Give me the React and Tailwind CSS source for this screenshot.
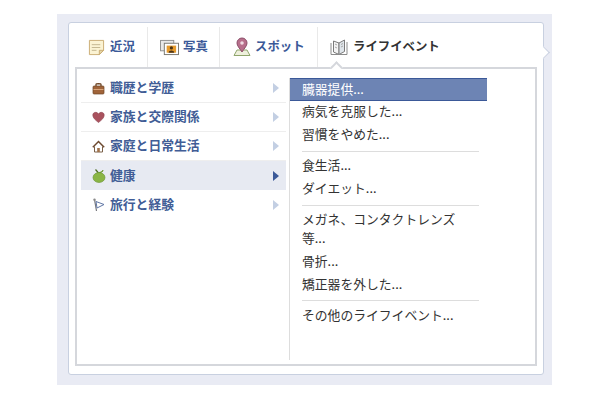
const font = { fontFamily: '"Noto Sans CJK JP", "Liberation Sans", sans-serif' };

function NoteIcon() {
  return (
    <svg width="17" height="17" viewBox="0 0 18 18" className="shrink-0">
      <path d="M1.5 1.5H16.5V12L12 16.5H1.5Z" fill="#fbf3d3" stroke="#c9ab72" />
      <path d="M16.5 12H12V16.5Z" fill="#e5d6a6" stroke="#c9ab72" />
      <path d="M4 6H13M4 9H13M4 12H9" stroke="#c2b58e" />
    </svg>
  );
}

function PhotoIcon() {
  return (
    <svg width="19" height="17" viewBox="0 0 20 18" className="shrink-0">
      <rect x="0.5" y="1.5" width="14" height="11" fill="#e8e8e8" stroke="#8e8e8e" />
      <rect x="4.5" y="4.5" width="15" height="12" fill="#fff" stroke="#77756f" />
      <rect x="7" y="7" width="10" height="7.5" fill="#e59a2d" />
      <circle cx="12" cy="9.5" r="1.7" fill="#4d3415" />
      <path d="M9 14.5C9 11.5 15 11.5 15 14.5Z" fill="#4d3415" />
    </svg>
  );
}

function PinIcon() {
  return (
    <svg width="18" height="20" viewBox="0 0 18 20" className="shrink-0">
      <path d="M4 13L1 18.5H17L14 13Z" fill="#eef0dc" stroke="#8fa56c" />
      <path d="M9 15C6.5 11 4 9 4 6A5 5 0 0 1 14 6C14 9 11.5 11 9 15Z" fill="#b76f8b" stroke="#8c4e69" />
      <circle cx="9" cy="6" r="1.8" fill="#f0dbe3" />
    </svg>
  );
}

function BookIcon() {
  return (
    <svg width="18" height="17" viewBox="0 0 18 17" className="shrink-0">
      <path d="M9 4L3.5 2V13L9 15.5Z" fill="#f4f4f4" stroke="#7b7b7b" />
      <path d="M9 4L14.5 1V12.5L9 15.5Z" fill="#dfe5ea" stroke="#7b7b7b" />
      <path d="M1 4V15.5H9M17 3V15.5H9" fill="none" stroke="#8b8b8b" />
      <path d="M11 5.5L13 4.5M11 8L13 7M5 5L7 6M5 8L7 9" stroke="#a8a8a8" />
    </svg>
  );
}

function BriefcaseIcon() {
  return (
    <svg width="13" height="13" viewBox="0 0 13 13">
      <path d="M4 4V2.5C4 1.5 9 1.5 9 2.5V4" fill="none" stroke="#6d4525" strokeWidth="1.3" />
      <rect x="1" y="4" width="11" height="8" rx="1" fill="#a0643a" stroke="#6d4525" strokeWidth="0.7" />
      <path d="M1.5 7.5H11.5" stroke="#d8a67c" />
    </svg>
  );
}

function HeartIcon() {
  return (
    <svg width="13" height="12" viewBox="0 0 13 12">
      <path d="M6.5 11.5C3 8.8 0.8 6.8 0.8 4.1C0.8 1 5 0.3 6.5 3C8 0.3 12.2 1 12.2 4.1C12.2 6.8 10 8.8 6.5 11.5Z" fill="#a9525e" stroke="#8e4450" strokeWidth="0.6" />
    </svg>
  );
}

function HouseIcon() {
  return (
    <svg width="13" height="13" viewBox="0 0 13 13">
      <path d="M2.5 6.5V12H10.5V6.5" fill="#fff" stroke="#7a6048" />
      <path d="M0.8 7.2L6.5 1.5L12.2 7.2" fill="none" stroke="#6d4a30" strokeWidth="1.5" />
      <rect x="5.2" y="8" width="2.6" height="4" fill="#a0714a" />
    </svg>
  );
}

function AppleIcon() {
  return (
    <svg width="14" height="15" viewBox="0 0 14 15">
      <path d="M3.5 1.5L6.5 5" stroke="#4b6b1f" strokeWidth="1.2" />
      <path d="M7 5C9 4 11 4 11 2" stroke="#6f9a34" strokeWidth="1.2" fill="none" />
      <ellipse cx="7" cy="9.5" rx="6" ry="5" fill="#8ab545" stroke="#66902d" strokeWidth="0.6" />
    </svg>
  );
}

function FlagIcon() {
  return (
    <svg width="13" height="14" viewBox="0 0 13 14">
      <path d="M2.5 1.5L4.5 13" stroke="#77787d" strokeWidth="1.2" />
      <path d="M4 3.5L12 6.5L5 10Z" fill="#fff" stroke="#5f76a5" />
      <circle cx="2.5" cy="1.8" r="1.2" fill="#8a8a8a" />
    </svg>
  );
}

const tabs = [
  { label: '近況', icon: <NoteIcon />, className: 'w-[79px] pl-[19px] gap-[5px]', color: 'text-[#3b5998]' },
  { label: '写真', icon: <PhotoIcon />, className: 'w-[72px] pl-[12px] gap-[4px]', color: 'text-[#3b5998]' },
  { label: 'スポット', icon: <PinIcon />, className: 'w-[98px] pl-[13px] gap-[4px]', color: 'text-[#3b5998]' },
  { label: 'ライフイベント', icon: <BookIcon />, className: 'flex-1 pl-[12px] gap-[5px]', color: 'text-[#333333]' },
];

const categories = [
  { label: '職歴と学歴', icon: <BriefcaseIcon /> },
  { label: '家族と交際関係', icon: <HeartIcon /> },
  { label: '家庭と日常生活', icon: <HouseIcon /> },
  { label: '健康', icon: <AppleIcon />, active: true },
  { label: '旅行と経験', icon: <FlagIcon />, last: true },
];

function Item({ children, active }) {
  return (
    <div className={`pl-[12px] pr-[25px] leading-[19px] text-[12.8px] ${active ? 'bg-[#6d84b4] text-white border-y border-[#3b5998] pb-[2px]' : 'text-[#333333] pb-[4px]'}`}>
      {children}
    </div>
  );
}

function Sep({ tight }) {
  return <div className={`h-px bg-[#dddddd] ml-[12px] w-[177px] ${tight ? 'mt-[3px] mb-[4px]' : 'mt-[4px] mb-[3px]'}`} />;
}

export default function App() {
  return (
    <div className="w-[610px] h-[400px] bg-white pl-[57px] pt-[14px]" style={font}>
      <div className="w-[495px] h-[371px] bg-[#e9ebf4] pl-[11px] pt-[8px]">
        <div className="relative w-[476px] h-[353px] bg-white border border-[#c8d0e0] rounded-[3px] px-[6px] pb-[8px] flex flex-col">
          {/* right notch */}
          <div className="absolute right-[-5px] top-[25px] w-[9px] h-[9px] bg-white rotate-45 border-t border-r border-[#c8d0e0]" />

          <div className="h-[44px] flex pt-[4px] -mx-[6px] shrink-0">
            {tabs.map((t, i) => (
              <div key={t.label} className={`flex items-center h-[40px] font-bold text-[12.4px] ${t.className} ${t.color} ${i < 3 ? 'border-r border-[#e9e9e9]' : ''}`}>
                {t.icon}
                <span className="pb-[2px]">{t.label}</span>
              </div>
            ))}
          </div>

          <div className="relative flex-1 bg-white border-2 border-[#d5d7dc] flex">
            {/* caret under the active tab */}
            <div className="absolute left-[255px] top-[-6px] w-[9px] h-[9px] bg-white rotate-45 border-t-2 border-l-2 border-[#d5d7dc]" />

            <div className="w-[212px] shrink-0 pt-[5px] pl-[4px] pr-[3px]">
              {categories.map((c) => (
                <div key={c.label} className={`h-[29px] flex items-center ${c.active ? 'bg-[#e7eaf2]' : ''} ${c.last || c.active ? '' : 'border-b border-[#eeeeee]'}`}>
                  <div className="w-[29px] pl-[11px] flex justify-start shrink-0">{c.icon}</div>
                  <span className="text-[12.8px] font-bold text-[#415d96] flex-1 pb-[2px]">{c.label}</span>
                  <div className={`w-0 h-0 border-y-[5px] border-y-transparent border-l-[6px] mr-[7px] ${c.active ? 'border-l-[#3b5998]' : 'border-l-[#c3cfe3]'}`} />
                </div>
              ))}
            </div>

            <div className="flex-1 mt-[9px] mb-[4px] border-l border-[#dddddd]">
              <div className="w-[197px]">
                <Item active>臓器提供...</Item>
                <Item>病気を克服した...</Item>
                <Item>習慣をやめた...</Item>
                <Sep />
                <Item>食生活...</Item>
                <Item>ダイエット...</Item>
                <Sep />
                <Item>メガネ、コンタクトレンズ等...</Item>
                <Item>骨折...</Item>
                <Item>矯正器を外した...</Item>
                <Sep tight />
                <Item>その他のライフイベント...</Item>
              </div>
            </div>
          </div>
        </div>
      </div>
    </div>
  );
}
